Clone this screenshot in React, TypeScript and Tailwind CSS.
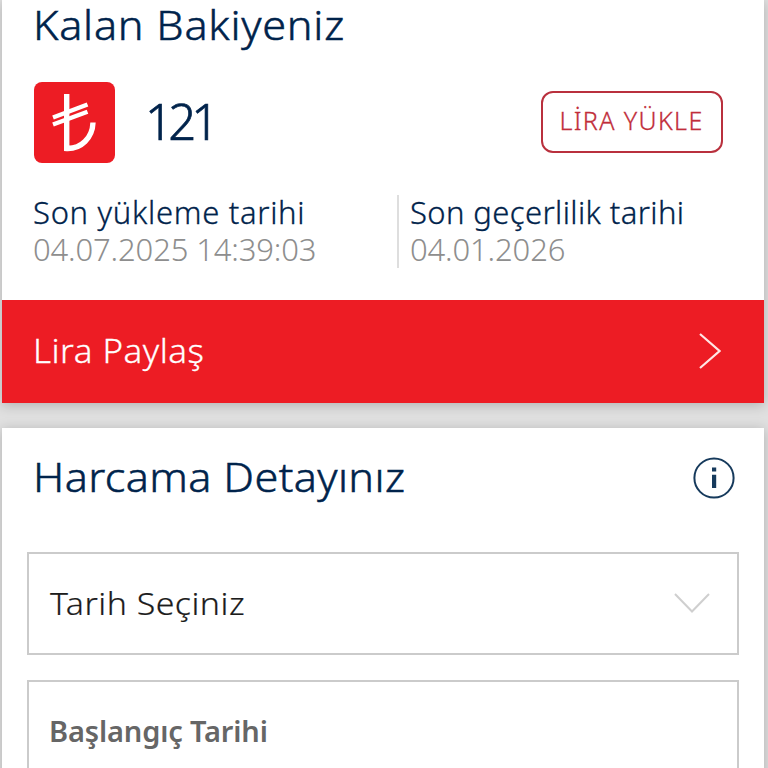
import type { ReactNode } from 'react';

function LiraIcon() {
  return (
    <svg viewBox="0 0 81 81" className="h-[81px] w-[81px] shrink-0" aria-hidden="true">
      <rect width="81" height="81" rx="8" fill="#ed1c24" />
      <path d="M32.7 12V66.5C47 67 58.500 56 59 40.500" fill="none" stroke="#fff" strokeWidth="5.400" />
      <path d="M19 35.500L53.500 22.500M19 42.500L53.500 29.800" fill="none" stroke="#fff" strokeWidth="4.400" />
    </svg>
  );
}

function InfoIcon() {
  return (
    <svg viewBox="0 0 42 42" className="h-[42px] w-[42px]" aria-hidden="true">
      <circle cx="21" cy="21" r="19.600" fill="none" stroke="#163a5c" strokeWidth="2" />
      <path d="M19 10.500h4.200v4H19zM19 17.800h4.200V31H19z" fill="#163a5c" />
    </svg>
  );
}

function DateInfo({ label, value, className }: { label: ReactNode; value: string; className: string }) {
  return (
    <div className="-mt-px text-[31px] leading-[37px]">
      <div className={`text-[#00234b] [-webkit-text-stroke:0.3px_#00234b] ${className}`}>{label}</div>
      <div className="tracking-[-0.15px] text-[#8e8e8e]">{value}</div>
    </div>
  );
}

export default function App() {
  return (
    <div className="flex h-[768px] w-[768px] flex-col gap-[25px] overflow-hidden bg-[#e0e0e0] pr-[4.500px] pl-[2px] font-['Noto_Sans',sans-serif] font-light whitespace-nowrap">
      <section className="h-[403px] shrink-0 bg-white shadow-[0_2px_12px_rgba(0,0,0,0.22)]">
        <h1 className="ml-[31px] h-[82px] w-fit origin-left scale-x-[1.08] text-[40px] leading-[49px] tracking-[0.700px] text-[#00234b] [-webkit-text-stroke:0.5px_#00234b]">
          Kalan Bakiyeniz
        </h1>

        <div className="flex h-[81px] items-center pr-[41px] pl-[32px]">
          <LiraIcon />
          <span className="-mt-[2px] ml-[30px] text-[49px] leading-none tracking-[-4.800px] text-[#00234b] [-webkit-text-stroke:0.7px_#00234b]">
            121
          </span>
          <button className="-mt-[2px] ml-auto h-[62px] w-[182px] rounded-[12px] border-2 border-[#b9303d] pb-px text-[25px] tracking-[1.400px] text-[#c12d3a] [-webkit-text-stroke:0.3px_#c12d3a]">
            LİRA YÜKLE
          </button>
        </div>

        <div className="mt-[32px] flex h-[73px] pl-[31px]">
          <div className="w-[364px]">
            <DateInfo label="Son yükleme tarihi" value="04.07.2025 14:39:03" className="tracking-[0.7px]" />
          </div>
          <div className="border-l-2 border-[#dedede] pl-[11px]">
            <DateInfo label="Son geçerlilik tarihi" value="04.01.2026" className="tracking-[0.4px]" />
          </div>
        </div>

        <button className="mt-[31.500px] flex h-[103.500px] w-full items-center justify-between bg-[#ed1c24] pr-[43px] pl-[31px] text-[33px] text-white">
          <span className="-mt-[2px] origin-left scale-x-[1.060] tracking-[0.450px] [-webkit-text-stroke:0.3px_#fff]">Lira Paylaş</span>
          <svg viewBox="0 0 22 36" className="h-[36px] w-[22px]" fill="none" stroke="#ffe6e4" strokeWidth="2.200">
            <path d="M1 1L20.500 18L1 35" />
          </svg>
        </button>
      </section>

      <section className="h-[360px] shrink-0 bg-white px-[25px] shadow-[0_2px_12px_rgba(0,0,0,0.22)]">
        <div className="flex h-[124px] items-start justify-between pt-[29px] pr-[4px] pl-[6px]">
          <h2 className="origin-left scale-x-[1.080] text-[40px] leading-[40px] tracking-[0.350px] text-[#00234b] [-webkit-text-stroke:0.5px_#00234b]">
            Harcama Detayınız
          </h2>
          <InfoIcon />
        </div>

        <div className="flex h-[103px] items-center justify-between border-2 border-[#cbcbcb] pr-[27px] pl-[21px] text-[32px] text-[#1c1c1c]">
          <span className="-mt-[2px] origin-left scale-x-[1.060] tracking-[0.450px] [-webkit-text-stroke:0.2px_#1c1c1c]">Tarih Seçiniz</span>
          <svg viewBox="0 0 36 20" className="-mt-px h-[20px] w-[36px]" fill="none" stroke="#cfcfcf" strokeWidth="2">
            <path d="M1 1L18 18.500L35 1" />
          </svg>
        </div>

        <div className="mt-[25px] flex h-[103px] items-center border-2 border-[#cbcbcb] pb-[2px] pl-[20px] text-[29px] font-semibold tracking-[-0.150px] text-[#666]">
          Başlangıç Tarihi
        </div>
      </section>
    </div>
  );
}
